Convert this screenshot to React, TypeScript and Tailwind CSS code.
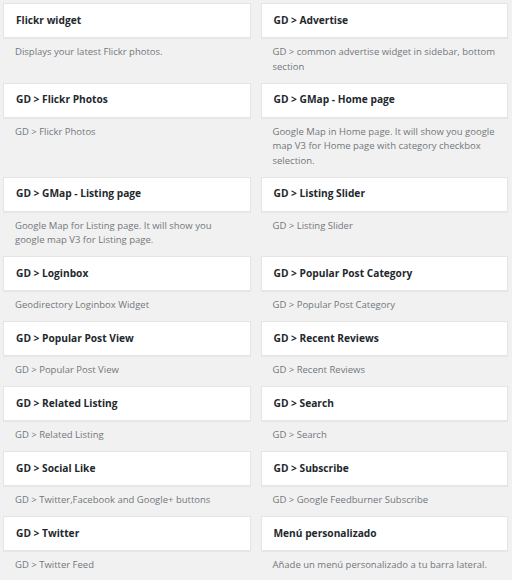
const widgets: [string, string][] = [
  ["Flickr widget", "Displays your latest Flickr photos."],
  ["GD > Advertise", "GD > common advertise widget in sidebar, bottom section"],
  ["GD > Flickr Photos", "GD > Flickr Photos"],
  [
    "GD > GMap - Home page",
    "Google Map in Home page. It will show you google map V3 for Home page with category checkbox selection.",
  ],
  ["GD > GMap - Listing page", "Google Map for Listing page. It will show you google map V3 for Listing page."],
  ["GD > Listing Slider", "GD > Listing Slider"],
  ["GD > Loginbox", "Geodirectory Loginbox Widget"],
  ["GD > Popular Post Category", "GD > Popular Post Category"],
  ["GD > Popular Post View", "GD > Popular Post View"],
  ["GD > Recent Reviews", "GD > Recent Reviews"],
  ["GD > Related Listing", "GD > Related Listing"],
  ["GD > Search", "GD > Search"],
  ["GD > Social Like", "GD > Twitter,Facebook and Google+ buttons"],
  ["GD > Subscribe", "GD > Google Feedburner Subscribe"],
  ["GD > Twitter", "GD > Twitter Feed"],
  ["Menú personalizado", "Añade un menú personalizado a tu barra lateral."],
];

const App = () => {
  return (
    <div
      className="min-h-[580px] bg-[#f1f1f1] pt-[3px] pl-[3px] pr-[4px]"
      style={{ fontFamily: '"Open Sans", "Noto Sans", sans-serif' }}
    >
      <div className="grid grid-cols-2 gap-x-[10px]">
        {widgets.map(([title, desc]) => (
          <div key={title} className="flex flex-col">
            <div className="h-[35px] flex items-center bg-white border border-[#e5e5e5] shadow-[0_1px_1px_rgba(0,0,0,0.04)] pl-[12px]">
              <h3 className="text-[10.2px] font-bold text-[#23282d]">{title}</h3>
            </div>
            <p className="pl-[12px] pr-[12px] pt-[7px] pb-[8.5px] text-[9.5px] leading-[14.5px] text-[#72777c]">
              {desc}
            </p>
          </div>
        ))}
      </div>
    </div>
  );
};

export default App;
